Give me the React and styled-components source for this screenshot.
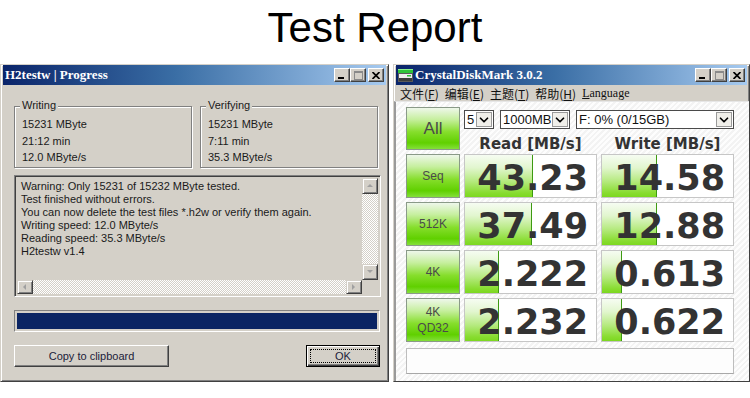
import React from 'react';
import styled, { createGlobalStyle } from 'styled-components';
import { ChevronDown } from 'lucide-react';

const GlobalStyle = createGlobalStyle`
  html, body {
    margin: 0;
    padding: 0;
    background: #fff;
  }
  body {
    width: 750px;
    height: 398px;
    overflow: hidden;
    font-family: "Liberation Sans", Arial, sans-serif;
  }
`;

const Page = styled.div`
  width: 750px;
  height: 398px;
  display: flex;
  flex-direction: column;
`;

const Heading = styled.h1`
  margin: 0;
  height: 64px;
  padding-top: 4px;
  box-sizing: border-box;
  text-align: center;
  font: 400 42px/48px "Liberation Sans", Arial, sans-serif;
  color: #000;
`;

const Windows = styled.div`
  display: flex;
  gap: 4px;
  align-items: flex-start;
`;

const Win = styled.div`
  box-sizing: border-box;
  width: ${(p) => p.$w}px;
  height: 318px;
  background: #d4d0c8;
  border: 1px solid;
  border-color: #d4d0c8 #404040 #404040 #d4d0c8;
  box-shadow: inset 1px 1px #fff, inset -1px -1px #808080;
  padding: 0 2px 2px 2px;
  display: flex;
  flex-direction: column;
`;

const TitleBar = styled.div`
  height: 20px;
  flex: none;
  display: flex;
  align-items: center;
  gap: 2px;
  padding: 0 2px 0 2px;
  background: linear-gradient(90deg, #0a246a 0%, #3a6ea5 45%, #a6caf0 100%);
  color: #fff;
  font: 700 13px "Liberation Serif", "Times New Roman", serif;
`;

const TitleText = styled.span`
  flex: 1;
  white-space: nowrap;
`;

const CaptionButtons = styled.div`
  display: flex;
`;

const CaptionButton = styled.div`
  width: 16px;
  height: 14px;
  box-sizing: border-box;
  background: #d4d0c8;
  border: 1px solid;
  border-color: #fff #404040 #404040 #fff;
  box-shadow: inset -1px -1px #808080;
  display: flex;
  align-items: center;
  justify-content: center;
  margin-left: ${(p) => (p.$gap ? 2 : 0)}px;
`;

const MinGlyph = () => (
  <svg width="8" height="8" viewBox="0 0 8 8">
    <rect x="0" y="6" width="6" height="2" fill="#000" />
  </svg>
);

const MaxGlyph = () => (
  <svg width="9" height="9" viewBox="0 0 9 9">
    <rect x="0.5" y="0.5" width="8" height="8" fill="none" stroke="#8a8a8a" />
    <rect x="0" y="0" width="9" height="2" fill="#8a8a8a" />
  </svg>
);

const CloseGlyph = () => (
  <svg width="8" height="7" viewBox="0 0 8 7">
    <path d="M0.5 0 L7.5 7 M7.5 0 L0.5 7" stroke="#000" strokeWidth="1.7" />
  </svg>
);

const Caption = ({ children, icon }) => (
  <TitleBar>
    {icon}
    <TitleText>{children}</TitleText>
    <CaptionButtons>
      <CaptionButton><MinGlyph /></CaptionButton>
      <CaptionButton><MaxGlyph /></CaptionButton>
      <CaptionButton $gap><CloseGlyph /></CaptionButton>
    </CaptionButtons>
  </TitleBar>
);

/* ---------- H2testw ---------- */

const H2Body = styled.div`
  flex: 1;
  display: flex;
  flex-direction: column;
  padding: 0 5px 0 11px;
  font-size: 11px;
  color: #1a1a1a;
`;

const GroupRow = styled.div`
  display: flex;
  gap: 8px;
  margin: 21px 3px 0 0;
`;

const GroupBox = styled.div`
  position: relative;
  flex: 1;
  height: 62px;
  box-sizing: border-box;
  border: 1px solid #808080;
  box-shadow: 1px 1px 0 #fff, inset 1px 1px 0 #fff;
  padding: 9px 0 0 7px;
  line-height: 16.5px;
`;

const GroupLabel = styled.span`
  position: absolute;
  top: -8px;
  left: 5px;
  padding: 0 2px;
  line-height: 13px;
  background: #d4d0c8;
`;

const LogBox = styled.div`
  margin-top: 7px;
  height: 122px;
  box-sizing: border-box;
  border: 1px solid;
  border-color: #808080 #fff #fff #808080;
  box-shadow: inset 1px 1px #404040, inset -1px -1px #d4d0c8;
  padding: 2px;
  display: grid;
  grid-template-columns: 1fr 16px;
  grid-template-rows: 1fr 14px;
`;

const LogText = styled.div`
  padding: 2px 0 0 4px;
  line-height: 13px;
  white-space: nowrap;
  overflow: hidden;
`;

const ScrollTrack = styled.div`
  display: flex;
  flex-direction: ${(p) => (p.$horizontal ? 'row' : 'column')};
  justify-content: space-between;
  background: repeating-conic-gradient(#fff 0 25%, #d4d0c8 0 50%) 0 0 / 2px 2px;
`;

const ScrollButton = styled.div`
  width: 16px;
  height: ${(p) => (p.$horizontal ? 14 : 16)}px;
  box-sizing: border-box;
  background: #d4d0c8;
  border: 1px solid;
  border-color: #d4d0c8 #404040 #404040 #d4d0c8;
  box-shadow: inset 1px 1px #fff, inset -1px -1px #808080;
  display: flex;
  align-items: center;
  justify-content: center;
`;

const ScrollCorner = styled.div`
  background: #d4d0c8;
`;

const Arrow = ({ dir }) => {
  const pts = {
    up: '1,5 4,2 7,5',
    down: '1,2 4,5 7,2',
    left: '5,1 2,4 5,7',
    right: '2,1 5,4 2,7',
  }[dir];
  return (
    <svg width="8" height="8" viewBox="0 0 8 8">
      <polygon points={pts} fill="#a0a0a0" />
    </svg>
  );
};

const ProgressBar = styled.div`
  margin: 13px 1px 0 0;
  height: 22px;
  box-sizing: border-box;
  border: 1px solid;
  border-color: #808080 #fff #fff #808080;
  padding: 2px;
`;

const ProgressFill = styled.div`
  height: 100%;
  background: #0a2463;
`;

const ButtonRow = styled.div`
  margin: 13px 1px 0 0;
  display: flex;
  justify-content: space-between;
`;

const PushButton = styled.div`
  width: ${(p) => p.$w}px;
  height: 22px;
  box-sizing: border-box;
  background: #d4d0c8;
  border: 1px solid;
  border-color: #fff #404040 #404040 #fff;
  box-shadow: inset -1px -1px #808080;
  display: flex;
  align-items: center;
  justify-content: center;
  font-size: 11px;
  color: #1c1c3a;
`;

const DefaultButton = styled(PushButton)`
  border: 1px solid #000;
  box-shadow: inset 1px 1px #fff, inset -1px -1px #404040, inset -2px -2px #808080;
  padding: 3px;
`;

const FocusRing = styled.span`
  flex: 1;
  align-self: stretch;
  display: flex;
  align-items: center;
  justify-content: center;
  border: 1px dotted #000;
`;

const logLines = [
  'Warning: Only 15231 of 15232 MByte tested.',
  'Test finished without errors.',
  'You can now delete the test files *.h2w or verify them again.',
  'Writing speed: 12.0 MByte/s',
  'Reading speed: 35.3 MByte/s',
  'H2testw v1.4',
];

const H2TestWindow = () => (
  <Win $w={389}>
    <Caption>H2testw | Progress</Caption>
    <H2Body>
      <GroupRow>
        <GroupBox>
          <GroupLabel>Writing</GroupLabel>
          <div>15231 MByte</div>
          <div>21:12 min</div>
          <div>12.0 MByte/s</div>
        </GroupBox>
        <GroupBox>
          <GroupLabel>Verifying</GroupLabel>
          <div>15231 MByte</div>
          <div>7:11 min</div>
          <div>35.3 MByte/s</div>
        </GroupBox>
      </GroupRow>
      <LogBox>
        <LogText>
          {logLines.map((l) => (
            <div key={l}>{l}</div>
          ))}
        </LogText>
        <ScrollTrack>
          <ScrollButton><Arrow dir="up" /></ScrollButton>
          <ScrollButton><Arrow dir="down" /></ScrollButton>
        </ScrollTrack>
        <ScrollTrack $horizontal>
          <ScrollButton $horizontal><Arrow dir="left" /></ScrollButton>
          <ScrollButton $horizontal><Arrow dir="right" /></ScrollButton>
        </ScrollTrack>
        <ScrollCorner />
      </LogBox>
      <ProgressBar>
        <ProgressFill />
      </ProgressBar>
      <ButtonRow>
        <PushButton $w={155}>Copy to clipboard</PushButton>
        <DefaultButton $w={74}>
          <FocusRing>OK</FocusRing>
        </DefaultButton>
      </ButtonRow>
    </H2Body>
  </Win>
);

/* ---------- CrystalDiskMark ---------- */

const DiskIcon = () => (
  <svg width="15" height="15" viewBox="0 0 15 15">
    <rect x="0" y="1" width="15" height="4" fill="#2fc43a" />
    <rect x="0" y="1" width="15" height="1" fill="#8df08f" />
    <rect x="0.5" y="5.5" width="14" height="8" fill="#eeeeee" stroke="#5a5a5a" />
    <rect x="1" y="10" width="13" height="3" fill="#3c3c3c" />
    <rect x="9" y="7" width="4" height="1.5" fill="#2fc43a" />
  </svg>
);

const MenuBar = styled.div`
  height: 16px;
  flex: none;
  display: flex;
  align-items: center;
  gap: 6px;
  padding-left: 4px;
  font: 12px "Noto Sans CJK SC", "Liberation Sans", sans-serif;
  color: #111;
`;

const MenuItem = styled.span`
  white-space: nowrap;
  font-family: ${(p) => (p.$latin ? '"Liberation Serif", serif' : 'inherit')};
`;

const CdmContent = styled.div`
  flex: 1;
  margin: 0 -2px -2px -2px;
  border-left: 2px solid #9a9a9a;
  border-top: 1px solid #e6e6e6;
  background: repeating-linear-gradient(135deg, #fdfdfd 0 2px, #f3f3f3 2px 4px);
  padding: 5px 0 0 10px;
`;

const Board = styled.div`
  display: grid;
  grid-template-columns: 54px 133px 133px;
  grid-template-rows: 43px repeat(4, 44px) 26px;
  column-gap: 4px;
  row-gap: 4px;
`;

const GreenButton = styled.div`
  box-sizing: border-box;
  border: 1px solid #8a9a88;
  background: linear-gradient(
    180deg,
    #eef7ea 0%,
    #c6ef9e 28%,
    #86de2c 58%,
    #60d000 85%,
    #84e03a 100%
  );
  display: flex;
  flex-direction: column;
  align-items: center;
  justify-content: center;
  font: ${(p) => (p.$big ? '17px' : '12px')} / 16px "Liberation Sans", Arial, sans-serif;
  color: #4a4a4a;
  text-align: center;
`;

const TopControls = styled.div`
  grid-column: 2 / span 2;
  display: flex;
  flex-direction: column;
`;

const SelectRow = styled.div`
  margin-top: 3px;
  display: flex;
  gap: 6px;
`;

const SelectBox = styled.div`
  width: ${(p) => p.$w}px;
  height: 19px;
  box-sizing: border-box;
  border: 1px solid #4a4a4a;
  background: #fff;
  display: flex;
  align-items: stretch;
  font: 13px/17px "Liberation Sans", Arial, sans-serif;
  color: #111;
`;

const SelectValue = styled.span`
  flex: 1;
  padding-left: 2px;
  white-space: nowrap;
  overflow: hidden;
`;

const DropButton = styled.span`
  width: 16px;
  flex: none;
  box-sizing: border-box;
  margin: 1px;
  border: 1px solid #9a9a9a;
  background: #f0efea;
  display: flex;
  align-items: center;
  justify-content: center;
  color: #000;
`;

const Select = ({ w, children }) => (
  <SelectBox $w={w}>
    <SelectValue>{children}</SelectValue>
    <DropButton>
      <ChevronDown size={14} strokeWidth={3} />
    </DropButton>
  </SelectBox>
);

const HeaderRow = styled.div`
  margin-top: 6px;
  display: grid;
  grid-template-columns: 133px 133px;
  column-gap: 4px;
  font: 700 15px/18px "DejaVu Sans", Verdana, sans-serif;
  color: #333;
  text-align: center;
`;

const ResultCell = styled.div`
  display: grid;
  box-sizing: border-box;
  border: 1px solid #c6c6c6;
  background: #fff;
  overflow: hidden;
`;

const ResultBar = styled.div`
  grid-area: 1 / 1;
  box-sizing: border-box;
  border-right: 1px solid #3d9a12;
  background: linear-gradient(
    180deg,
    #f6fcf2 0%,
    #e2f6cf 30%,
    #b6ea80 62%,
    #88dc30 90%,
    #7cd820 100%
  );
`;

const ResultValue = styled.div`
  grid-area: 1 / 1;
  justify-self: end;
  align-self: center;
  padding: 5px 8px 0 0;
  font: 700 35px/35px "DejaVu Sans", Verdana, sans-serif;
  color: #333;
`;

const Comment = styled.div`
  grid-column: 1 / -1;
  margin-top: 2px;
  height: 26px;
  box-sizing: border-box;
  border: 1px solid #bdbdbd;
  border-bottom-color: #a8a8a8;
  background: #fdfdfd;
`;

const results = [
  { label: ['Seq'], read: '43.23', readPct: 52, write: '14.58', writePct: 42 },
  { label: ['512K'], read: '37.49', readPct: 51, write: '12.88', writePct: 42 },
  { label: ['4K'], read: '2.222', readPct: 26, write: '0.613', writePct: 15 },
  { label: ['4K', 'QD32'], read: '2.232', readPct: 26, write: '0.622', writePct: 15 },
];

const Result = ({ value, pct }) => (
  <ResultCell>
    <ResultBar style={{ width: `${pct}%` }} />
    <ResultValue>{value}</ResultValue>
  </ResultCell>
);

const CrystalWindow = () => (
  <Win $w={357}>
    <Caption icon={<DiskIcon />}>CrystalDiskMark 3.0.2</Caption>
    <MenuBar>
      <MenuItem>文件(<u>F</u>)</MenuItem>
      <MenuItem>编辑(<u>E</u>)</MenuItem>
      <MenuItem>主题(<u>T</u>)</MenuItem>
      <MenuItem>帮助(<u>H</u>)</MenuItem>
      <MenuItem $latin><u>L</u>anguage</MenuItem>
    </MenuBar>
    <CdmContent>
      <Board>
        <GreenButton $big>All</GreenButton>
        <TopControls>
          <SelectRow>
            <Select w={30}>5</Select>
            <Select w={70}>1000MB</Select>
            <Select w={158}>F: 0% (0/15GB)</Select>
          </SelectRow>
          <HeaderRow>
            <span>Read [MB/s]</span>
            <span>Write [MB/s]</span>
          </HeaderRow>
        </TopControls>
        {results.map((r) => (
          <React.Fragment key={r.read}>
            <GreenButton>
              {r.label.map((t) => (
                <span key={t}>{t}</span>
              ))}
            </GreenButton>
            <Result value={r.read} pct={r.readPct} />
            <Result value={r.write} pct={r.writePct} />
          </React.Fragment>
        ))}
        <Comment />
      </Board>
    </CdmContent>
  </Win>
);

const App = () => (
  <Page>
    <GlobalStyle />
    <Heading>Test Report</Heading>
    <Windows>
      <H2TestWindow />
      <CrystalWindow />
    </Windows>
  </Page>
);

export default App;
